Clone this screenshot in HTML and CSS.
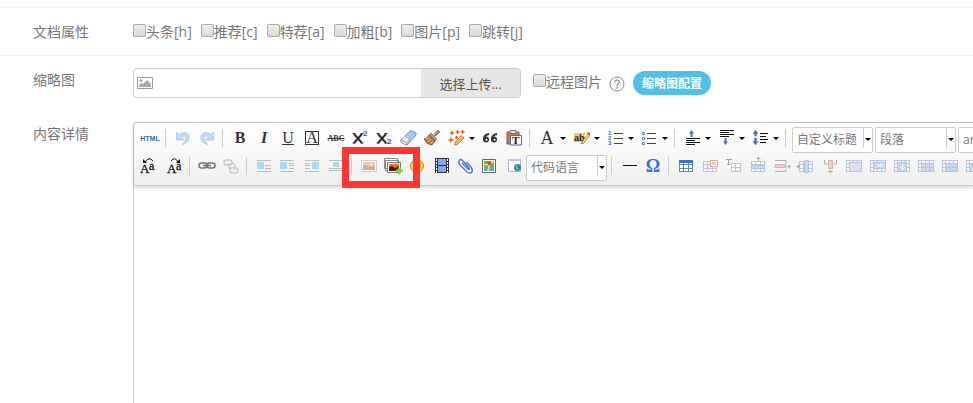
FILE: index.html
```html
<!DOCTYPE html>
<html lang="zh-CN">
<head>
  <meta charset="UTF-8" />
  <meta name="viewport" content="width=device-width, initial-scale=1.0" />
  <title>内容编辑</title>
  <link rel="stylesheet" href="styles.css">
</head>
<body>

  <!-- Shared icon shapes -->
  <svg class="sprite" aria-hidden="true">
    <symbol id="undo" viewBox="0 0 20 20">
      <path d="M3.500 4v8h8L8.500 9.500Q12 6.500 13 9Q14 12 9.500 16.500Q17 14.500 16 8Q13 2 6 6.500Z" fill="#c4dbf7" stroke="#a3c4ee" stroke-width=".8"/>
    </symbol>
    <symbol id="grid" viewBox="0 0 20 20">
      <path d="M3 5h14v11H3z" fill="#fff"/>
      <path d="M3.500 5v11M7.500 5v11M12.500 5v11M16.500 5v11M3 8.500h14M3 12.500h14M3 15.500h14M3 5.500h14" stroke="#6485b8" fill="none"/>
    </symbol>
    <symbol id="frame" viewBox="0 0 20 20">
      <path d="M2 4h16v12H2z" fill="#fff"/>
      <path d="M2.500 4v12M5.500 4v12M9.500 4v12M13.500 4v12M17.500 4v12M2 4.500h16M2 7.500h16M2 11.500h16M2 15.500h16" stroke="#6485b8" fill="none"/>
    </symbol>
    <symbol id="photo" viewBox="0 0 20 20">
      <path d="M2.500 4.500h15v11h-15z" fill="#fff" stroke="#999"/>
      <path d="M4 6h12v8H4z" fill="#f08a24"/>
      <path d="M4 10l3-1 3 2 3-2 3 2v3H4z" fill="#8a4a20"/>
      <circle cx="12.500" cy="8.500" r="1.500" fill="#ffe27a"/>
    </symbol>
  </svg>

  <form class="form">
    <div class="top-strip"></div>

    <!-- Document flags -->
    <div class="form-row flags-row">
      <span class="row-label">文档属性</span>
      <div class="flags">
        <label><input type="checkbox" name="h">头条[h]</label>
        <label><input type="checkbox" name="c">推荐[c]</label>
        <label><input type="checkbox" name="a">特荐[a]</label>
        <label><input type="checkbox" name="b">加粗[b]</label>
        <label><input type="checkbox" name="p">图片[p]</label>
        <label><input type="checkbox" name="j">跳转[j]</label>
      </div>
    </div>

    <!-- Thumbnail upload -->
    <div class="form-row thumb-row">
      <label class="row-label" for="thumb">缩略图</label>
      <div class="upload">
        <svg class="upload-icon" viewBox="0 0 16 12"><path d="M.5.5h15v11H.5z" fill="#fff" stroke="#999"/><circle cx="4" cy="3.500" r="1.500" fill="#aaa"/><path d="M2 10V8l2.500-2L6 7l4-4 4 4v3z" fill="#aaa"/></svg>
        <input type="text" id="thumb" name="thumb">
        <button type="button">选择上传...</button>
      </div>
      <label class="remote"><input type="checkbox" name="remote">远程图片</label>
      <a class="help" href="#" aria-label="帮助">
        <svg viewBox="0 0 16 16"><circle cx="8" cy="8" r="7" fill="none" stroke="#888"/><path d="M5.700 6.500C5.700 3.200 10.400 3.300 10.300 6.200C10.200 7.900 8 7.900 8 10" fill="none" stroke="#888" stroke-width="1.200"/><path d="M7.300 11h1.400v1.400H7.300z" fill="#888"/></svg>
      </a>
      <button class="pill" type="button">缩略图配置</button>
    </div>

    <!-- Content editor -->
    <div class="form-row editor-row">
      <label class="row-label" for="content">内容详情</label>
      <div class="editor">
        <div class="toolbar">
          <div class="tool-row">
            <button type="button" class="tool t-html">HTML</button>
            <span class="sep"></span>
            <button type="button" class="tool" title="撤销"><svg><use href="#undo"/></svg></button>
            <button type="button" class="tool flip" title="重做"><svg><use href="#undo"/></svg></button>
            <span class="sep"></span>
            <button type="button" class="tool t-serif">B</button>
            <button type="button" class="tool t-serif t-italic">I</button>
            <button type="button" class="tool t-serif t-under">U</button>
            <button type="button" class="tool t-serif t-box"><span>A</span></button>
            <button type="button" class="tool t-strike">ABC</button>
            <button type="button" class="tool t-script" title="上标"><svg viewBox="0 0 20 20"><path d="M4 6l8 9M12 6l-8 9" stroke="#333" stroke-width="2"/><path d="M2.500 5.500h3M10.500 5.500h3M2.500 15h3M10.500 15h3" stroke="#333"/><text x="13" y="8">2</text></svg></button>
            <button type="button" class="tool t-script" title="下标"><svg viewBox="0 0 20 20"><path d="M4 6l8 9M12 6l-8 9" stroke="#333" stroke-width="2"/><path d="M2.500 5.500h3M10.500 5.500h3M2.500 15h3M10.500 15h3" stroke="#333"/><text x="13" y="16">2</text></svg></button>
            <button type="button" class="tool" title="清除格式"><svg viewBox="0 0 20 20"><path d="M13 2.500l5 2.500v2L9 17l-6-2.500V12z" fill="#a9cbf5" stroke="#4d7fc4" stroke-width=".8"/><path d="M3 12l5.500 2.500V17L3 14.500zM3 12l3.500-3.500 5.500 2.500-3.500 3.500z" fill="#fff" stroke="#999" stroke-width=".8"/></svg></button>
            <button type="button" class="tool" title="格式刷"><svg viewBox="0 0 20 20"><path d="M12 6.500l4-4.500 2 2-4.500 4z" fill="#c88a45" stroke="#7a4c1c" stroke-width=".7"/><path d="M9 5l6 6-2 2-6-6z" fill="#999" stroke="#666" stroke-width=".6"/><path d="M7 7l6 6-3 4q-5 0-8-6 3 0 5-4z" fill="#c07a35" stroke="#7a4c1c" stroke-width=".8"/><path d="M4 11l3-1M6 14l3-3M9 16l2-3" stroke="#f2c27c"/></svg></button>
            <button type="button" class="tool has-arrow" title="自动排版"><svg viewBox="0 0 20 20"><path d="M8 14.500l6-7 3 2.500-6.500 6.500-3 .500z" fill="#f4b860" stroke="#b87226" stroke-width=".8"/><path d="M5 3v4M3 5h4M10.500 2v4M8.500 4h4M4 9.500v5M1.500 12h5M15.500 2v4M13.500 4h4M9.500 8v3M8 9.500h3" stroke="#f0642a" stroke-width="1.500"/></svg></button>
            <button type="button" class="tool" title="引用"><svg viewBox="0 0 20 20"><g fill="#333"><circle cx="6" cy="11.500" r="3"/><circle cx="14" cy="11.500" r="3"/></g><path d="M4 11q0-4 5-5M12 11q0-4 5-5" fill="none" stroke="#333" stroke-width="2"/><circle cx="6.500" cy="11.800" r="1" fill="#fff"/><circle cx="14.500" cy="11.800" r="1" fill="#fff"/></svg></button>
            <button type="button" class="tool t-paste" title="粘贴"><svg viewBox="0 0 20 20"><path d="M3 4h12v12H3z" fill="#c8774a" stroke="#9a5229"/><path d="M6 2.500h6v3H6z" fill="#ddd" stroke="#777"/><path d="M6.500 7.500h11v9.500h-11z" fill="#fff" stroke="#4b6ea8"/><text x="8" y="16">T</text></svg></button>
            <span class="sep"></span>
            <button type="button" class="tool t-serif t-color has-arrow">A</button>
            <button type="button" class="tool t-mark has-arrow" title="背景色"><svg viewBox="0 0 20 20"><path d="M2 5h11v9H2z" fill="#ffc36b"/><text x="2" y="13">ab</text><path d="M10 14l6-8 2 1-6 8-3 1z" fill="#f8df9a" stroke="#a57023" stroke-width=".8"/><path d="M15 6l1-2 2 1v2z" fill="#e23b2f"/></svg></button>
            <button type="button" class="tool t-num has-arrow" title="有序列表"><svg viewBox="0 0 20 20"><text x="2" y="7">1</text><text x="2" y="12">2</text><text x="2" y="17">3</text><path d="M8 5.500h9M8 10.500h9M8 15.500h9" stroke="#444"/></svg></button>
            <button type="button" class="tool has-arrow" title="无序列表"><svg viewBox="0 0 20 20"><g fill="#dce9ff" stroke="#2f62cc"><circle cx="3.500" cy="5.500" r="1.200"/><circle cx="3.500" cy="10.500" r="1.200"/><circle cx="3.500" cy="15.500" r="1.200"/></g><path d="M7 5.500h9M7 10.500h9M7 15.500h9" stroke="#444"/></svg></button>
            <span class="sep"></span>
            <button type="button" class="tool has-arrow" title="段前距"><svg viewBox="0 0 20 20"><path d="M3 10.500h14M3 12.500h9M3 14.500h14M3 16.500h9" stroke="#111"/><path d="M8.500 2L11 5.500H9.500V9h-2V5.500H6z" fill="#4970b8"/></svg></button>
            <button type="button" class="tool has-arrow" title="段后距"><svg viewBox="0 0 20 20"><path d="M3 2.500h14M3 4.500h9M3 6.500h14M3 8.500h9" stroke="#111"/><path d="M8.500 17L11 13.500H9.500V10h-2v3.500H6z" fill="#4970b8"/></svg></button>
            <button type="button" class="tool has-arrow" title="行间距"><svg viewBox="0 0 20 20"><path d="M9 5.500h8M9 8.500h6M9 11.500h8M9 14.500h6" stroke="#111"/><path d="M4.500 2L7 5.500H5.500V8h-2V5.500H2zM4.500 17L7 13.500H5.500V10h-2v3.500H2z" fill="#4970b8" stroke="#4970b8" stroke-width=".4"/></svg></button>
            <span class="sep"></span>
            <span class="combo"><select aria-label="自定义标题"><option>自定义标题</option></select></span>
            <span class="combo"><select aria-label="段落格式"><option>段落</option></select></span>
            <span class="combo"><select aria-label="字体"><option>arial</option></select></span>
          </div>

          <div class="tool-row">
            <button type="button" class="tool t-dir" title="从左向右"><svg viewBox="0 0 20 20"><text x="0" y="17">A</text><text class="small" x="9" y="14">a</text><path d="M5 6Q9 0 13 5" fill="none" stroke="#111"/><path d="M3 3v4h4z" fill="#111"/></svg></button>
            <button type="button" class="tool t-dir" title="从右向左"><svg viewBox="0 0 20 20"><text x="3" y="17">A</text><text class="small" x="12" y="14">a</text><path d="M7 5Q11 0 14 6" fill="none" stroke="#111"/><path d="M16 3v4h-4z" fill="#111"/></svg></button>
            <span class="sep"></span>
            <button type="button" class="tool" title="超链接"><svg viewBox="0 0 20 20"><g fill="none" stroke="#777" stroke-width="1.600"><rect x="2" y="7" width="8" height="5" rx="2.500"/><rect x="10" y="7" width="8" height="5" rx="2.500"/><path d="M6 9.500h8"/></g></svg></button>
            <button type="button" class="tool" title="取消链接"><svg viewBox="0 0 20 20"><g fill="none" stroke="#ccc" stroke-width="1.600"><rect x="3" y="4" width="8" height="5" rx="2.500"/><rect x="9" y="12" width="8" height="5" rx="2.500"/><path d="M8 7v5h3M11 7q4 0 3 7"/></g></svg></button>
            <span class="sep"></span>
            <button type="button" class="tool" title="左浮动"><svg viewBox="0 0 20 20"><path d="M3 4.500h14M11 9.500h6M11 12.500h6M3 15.500h14" stroke="#bbb"/><path d="M3 6h7v7H3z" fill="#a5dcf5"/></svg></button>
            <button type="button" class="tool" title="左对齐"><svg viewBox="0 0 20 20"><path d="M2 4.500h14M11 7.500h5M11 9.500h5M11 12.500h5M2 15.500h14" stroke="#bbb"/><path d="M2 6h7v7H2z" fill="#a5dcf5"/></svg></button>
            <button type="button" class="tool" title="右浮动"><svg viewBox="0 0 20 20"><path d="M3 4.500h14M3 7.500h5M3 9.500h5M3 12.500h5M3 15.500h14" stroke="#bbb"/><path d="M10 6h7v7h-7z" fill="#a5dcf5"/></svg></button>
            <button type="button" class="tool" title="居中"><svg viewBox="0 0 20 20"><path d="M3 4.500h14M3 12.500h14M3 14.500h14" stroke="#bbb"/><path d="M7 6h6v5H7z" fill="#a5dcf5"/></svg></button>
            <!-- Image tools with the highlight frame -->
            <span class="marked">
              <span class="sep"></span>
              <button type="button" class="tool faded" title="图片"><svg><use href="#photo"/></svg></button>
              <button type="button" class="tool" title="多图上传"><svg viewBox="0 0 20 20"><path d="M1.500 2.500h13v10h-13zM2.500 4.500h13v10h-13z" fill="#fff" stroke="#888"/><path d="M4.500 6.500h13v10h-13z" fill="#fff" stroke="#777"/><path d="M6 8h10v7H6z" fill="#e8751a"/><path d="M6 11l3-1 3 2 4-2v5H6z" fill="#4b1f08"/><path d="M15 11.500h2.500v2H20V16h-2.500v2.500H15V16h-2v-2.500h2z" fill="#8ed329"/></svg></button>
            </span>
            <button type="button" class="tool" title="表情"><svg viewBox="0 0 20 20"><circle cx="10" cy="10" r="6.500" fill="#ffc94a" stroke="#c98412"/><path d="M7.500 7v2M12.500 7v2" stroke="#704000" stroke-width="1.500"/><path d="M6.500 11q3.500 4 7 0z" fill="#fff" stroke="#a05a00"/></svg></button>
            <button type="button" class="tool" title="视频"><svg viewBox="0 0 20 20"><path d="M4 2h14v15H4z" fill="#333"/><path d="M7 3h8v6H7zM7 10h8v6H7z" fill="#86a5ef"/><path d="M5.500 3v14M16.500 3v14" stroke="#fff" stroke-dasharray="2 1"/></svg></button>
            <button type="button" class="tool" title="附件"><svg viewBox="0 0 20 20"><path d="M7 7l6 6q2 1 1-1L8 5Q5 2 4 5q-1 2 1 4l7 7q3 2 5 0 1-2-1-5l-5-5" fill="none" stroke="#4775d8" stroke-width="1.400"/></svg></button>
            <button type="button" class="tool" title="地图"><svg viewBox="0 0 20 20"><path d="M3.500 3.500h13v13h-13z" fill="#fff" stroke="#666"/><path d="M5 5h10v10H5z" fill="#64b84b"/><path d="M5 11l4-1 6 3v2H5z" fill="#5ea5dc"/><path d="M5 9l5-1 5-3M9 15l2-9" stroke="#ffe45e" stroke-width="1.500"/><circle cx="10.500" cy="7.500" r="1.700" fill="#e33b1e"/></svg></button>
            <button type="button" class="tool" title="网页"><svg viewBox="0 0 20 20"><path d="M5.500 3.500h12v12h-12z" fill="#fff" stroke="#aab5c5"/><path d="M5 3h13v2H5z" fill="#b9c9e0"/><circle cx="14.500" cy="11.500" r="3.500" fill="#3279ba"/><path d="M12 11q1-3 3-2l-1 2 2 2-2 1z" fill="#6dcb6a"/></svg></button>
            <span class="combo"><select aria-label="代码语言"><option>代码语言</option></select></span>
            <span class="sep"></span>
            <button type="button" class="tool" title="分隔线"><svg viewBox="0 0 20 20"><path d="M4 9.500h14" stroke="#111"/></svg></button>
            <button type="button" class="tool t-omega">Ω</button>
            <span class="sep"></span>
            <button type="button" class="tool" title="插入表格"><svg viewBox="0 0 20 20"><use href="#grid"/><path d="M3 4h14v3H3z" fill="#3e6fd0"/></svg></button>
            <button type="button" class="tool faded" title="删除表格"><svg viewBox="0 0 20 20"><use href="#grid"/><path d="M10.500 4.500h7v6h-7z" fill="#fff" stroke="#d33"/><path d="M12 6l4 3M16 6l-4 3" stroke="#d33"/></svg></button>
            <button type="button" class="tool faded" title="表格前插入行"><svg viewBox="0 0 20 20"><path d="M2 3.500h6M4.500 3v6M3 8.500h3" stroke="#222"/><path d="M7 7h10v9H7z" fill="#fff"/><path d="M7 7.500h10M7 11.500h10M7 15.500h10M7.500 7v9M11.500 7v9M16.500 7v9" stroke="#6485b8"/></svg></button>
            <button type="button" class="tool faded" title="前插入行"><svg viewBox="0 0 20 20"><use href="#grid"/><path d="M3.500 9.500h13v3h-13z" fill="#77b5f5" stroke="#4c83c8"/><path d="M10.500 1v4M8.500 2.500h4" stroke="#444"/></svg></button>
            <button type="button" class="tool faded" title="删除行"><svg viewBox="0 0 20 20"><path d="M3 4.500h11v3M3 15.500h11v-3M15 10.500h4M17.500 8.500v4" fill="none" stroke="#444"/><path d="M3 8.500h11v3H3z" fill="#f58b86" stroke="#c35049"/></svg></button>
            <button type="button" class="tool faded" title="前插入列"><svg viewBox="0 0 20 20"><use href="#grid"/><path d="M8.500 4.500h4v12h-4z" fill="#77b5f5" stroke="#4c83c8"/><path d="M0 10.500h4M2.500 8.500v4" stroke="#444"/></svg></button>
            <button type="button" class="tool faded" title="删除列"><svg viewBox="0 0 20 20"><path d="M4.500 4v4h3M16.500 4v4h-3M10.500 14v3M8 15.500h5" fill="none" stroke="#444"/><path d="M8.500 4.500h4v8h-4z" fill="#f58b86" stroke="#c35049"/></svg></button>
            <button type="button" class="tool faded" title="合并单元格"><svg viewBox="0 0 20 20"><use href="#frame"/><path d="M5.500 6.500h12v9h-12z" fill="#b4c1ed" stroke="#5f7fc4"/></svg></button>
            <button type="button" class="tool faded" title="右合并"><svg viewBox="0 0 20 20"><use href="#frame"/><path d="M5.500 6.500h12v6h-12z" fill="#77b0e8" stroke="#4c83c8"/><path d="M9 9.500h5M12 7.500l3 2-3 2" stroke="#fff" fill="none"/></svg></button>
            <button type="button" class="tool faded" title="下合并"><svg viewBox="0 0 20 20"><use href="#frame"/><path d="M5.500 6.500h9v9h-9z" fill="#77b0e8" stroke="#4c83c8"/><path d="M10.500 8v5M8 11l2.500 3 2.500-3" stroke="#fff" fill="none"/></svg></button>
            <button type="button" class="tool faded" title="拆分单元格"><svg viewBox="0 0 20 20"><use href="#frame"/><path d="M5.500 7.500h12v8h-12zM9.500 7v8M13.500 7v8M6 11.500h11" fill="#9eaee8" stroke="#5f7fc4"/></svg></button>
            <button type="button" class="tool faded" title="拆分行"><svg viewBox="0 0 20 20"><use href="#frame"/><path d="M5.500 7.500h12v4h-12zM5.500 11.500h12v4h-12z" fill="#77b0e8" stroke="#4c83c8"/></svg></button>
            <button type="button" class="tool faded" title="拆分列"><svg viewBox="0 0 20 20"><use href="#frame"/><path d="M5.500 7.500h6v8h-6zM11.500 7.500h6v8h-6z" fill="#77b0e8" stroke="#4c83c8"/></svg></button>
          </div>
        </div>
        <textarea id="content" name="content"></textarea>
      </div>
    </div>
  </form>

</body>
</html>
```
FILE: styles.css
```css
* {
  box-sizing: border-box;
}

/* Page */
body {
  margin: 0;
  height: 100vh;
  overflow: hidden;
  background-color: #fff;
  color: #777;
  font-family: "Open Sans", "Noto Sans CJK SC", sans-serif;
  font-size: 14px;
  line-height: 20px;
}

button,
input,
select,
textarea {
  font-family: inherit;
}

.sprite {
  display: none;
}

.form {
  height: 100%;
  display: flex;
  flex-direction: column;
}

.top-strip {
  height: 8px;
  background-color: #fcfcfc;
  border-bottom: 1px solid #f3f3f3;
}

/* Rows with a label on the left */
.form-row {
  display: flex;
  padding-left: 33px;
}

.row-label {
  width: 100px;
  flex-shrink: 0;
}

.flags-row {
  padding-top: 14px;
  padding-bottom: 13px;
  border-bottom: 1px solid #f3f3f3;
}

.flags {
  display: flex;
  gap: 9px;
}

.flags label,
.remote {
  display: flex;
}

input[type="checkbox"] {
  appearance: none;
  width: 13px;
  height: 13px;
  margin: 2px 0 0;
  border: 1px solid #aaa;
  border-radius: 2px;
  background: linear-gradient(#eee, #d9d9d9);
}

/* Thumbnail upload */
.thumb-row {
  padding-top: 12px;
  padding-bottom: 24px;
}

.thumb-row .row-label {
  padding-top: 2px;
}

.upload {
  width: 388px;
  height: 30px;
  display: flex;
  align-items: center;
  border: 1px solid #ccc;
  border-radius: 4px;
  overflow: hidden;
}

.upload-icon {
  width: 16px;
  height: 12px;
  margin-left: 3px;
}

.upload input {
  flex: 1;
  min-width: 0;
  border: none;
  outline: none;
}

.upload button {
  width: 99px;
  height: 100%;
  padding: 0;
  border: none;
  background-color: #e6e6e6;
  color: #555;
  font-size: 13px;
}

.remote {
  margin: 4px 7px 0 12px;
}

.help {
  margin-top: 8px;
  height: 16px;
}

.help svg {
  display: block;
  width: 16px;
  height: 16px;
}

.pill {
  height: 24px;
  margin: 3px 0 0 8px;
  padding: 0 9px;
  border: none;
  border-radius: 12px;
  background-color: #4fc0e8;
  color: #fff;
  font-size: 12px;
  font-weight: bold;
}

/* Editor */
.editor-row {
  flex: 1;
  min-height: 0;
}

.editor-row .row-label {
  padding-top: 2px;
}

.editor {
  flex: 1;
  min-width: 0;
  display: flex;
  flex-direction: column;
  border: 1px solid #ccc;
  border-width: 1px 0 0 1px;
  border-radius: 4px 0 0 0;
}

.toolbar {
  padding: 3px 0 4px 4px;
  border-bottom: 1px solid #ccc;
  border-radius: 4px 0 0 0;
  background: linear-gradient(#fff, #efefef);
  box-shadow: 0 1px 4px rgba(0, 0, 0, 0.2);
  overflow-x: clip;
  z-index: 1;
}

.editor textarea {
  flex: 1;
  border: none;
  outline: none;
  resize: none;
}

.tool-row {
  height: 27px;
  display: flex;
  overflow-x: clip;
}

.tool-row + .tool-row {
  margin-top: 1px;
}

.sep {
  width: 1px;
  height: 18px;
  margin: 3px 5px 0 3px;
  flex-shrink: 0;
  background-color: #ccc;
}

.tool {
  width: 24px;
  height: 24px;
  flex-shrink: 0;
  display: flex;
  align-items: center;
  justify-content: center;
  padding: 0;
  border: none;
  background: none;
  color: #333;
}

.tool svg {
  width: 20px;
  height: 20px;
  flex-shrink: 0;
}

.flip svg {
  transform: scaleX(-1);
}

.faded svg {
  opacity: 0.4;
}

/* Drop-down arrow after a tool */
.has-arrow {
  width: 34px;
  gap: 2px;
}

.has-arrow::after,
.combo::after {
  content: "";
  border: 3px solid transparent;
  border-top-color: #000;
  border-bottom: none;
}

/* Tools drawn as letters */
.t-html {
  color: #2e6da4;
  font-family: "Liberation Sans", sans-serif;
  font-size: 7px;
  font-weight: bold;
}

.t-serif {
  font-family: "Liberation Serif", serif;
  font-size: 16px;
  font-weight: bold;
}

.t-italic {
  font-style: italic;
}

.t-under {
  text-decoration: underline;
  font-weight: normal;
}

.t-box span {
  width: 14px;
  height: 14px;
  border: 1px solid #333;
  line-height: 12px;
  font-weight: normal;
}

.t-color {
  padding-left: 2px;
  gap: 6px;
  font-weight: normal;
  font-size: 18px;
}

.t-strike {
  font-family: "Liberation Serif", serif;
  font-size: 8px;
  font-weight: bold;
  text-decoration: line-through;
}

.t-omega {
  color: #3b6fd8;
  font-family: "Liberation Serif", serif;
  font-size: 18px;
  font-weight: bold;
}

.t-script text {
  fill: #2458c8;
  font: bold 8px "Liberation Sans", sans-serif;
}

.t-paste text {
  fill: #222;
  font: bold 11px "Liberation Serif", serif;
}

.t-mark text {
  fill: #222;
  font: bold 9px "Liberation Sans", sans-serif;
}

.t-num text {
  fill: #2f6fd0;
  font: bold 6px "Liberation Sans", sans-serif;
}

.t-dir text {
  fill: #111;
  font: 13px "Liberation Serif", serif;
  stroke: #111;
  stroke-width: 0.3;
}

.t-dir .small {
  font-size: 12px;
}

/* Drop-down lists */
.combo {
  position: relative;
  width: 81px;
  height: 26px;
  margin: 1px 1px 0;
  flex-shrink: 0;
  border: 1px solid #ccc;
  border-radius: 2px;
  background: linear-gradient(#ccc, #ccc) 70px 0 / 1px 20px no-repeat #fff;
}

.combo::after {
  position: absolute;
  top: 10px;
  right: 1px;
}

.combo select {
  appearance: none;
  width: 100%;
  height: 100%;
  padding: 0 12px 2px 4px;
  border: none;
  background: none;
  color: #777;
  font-size: 12px;
}

/* Red frame round the image tools */
.marked {
  position: relative;
  display: flex;
}

.marked::after {
  content: "";
  position: absolute;
  top: -7px;
  left: -6px;
  right: -15px;
  bottom: -7px;
  border: 7px solid #fc3535;
  z-index: 2;
  pointer-events: none;
}
```
